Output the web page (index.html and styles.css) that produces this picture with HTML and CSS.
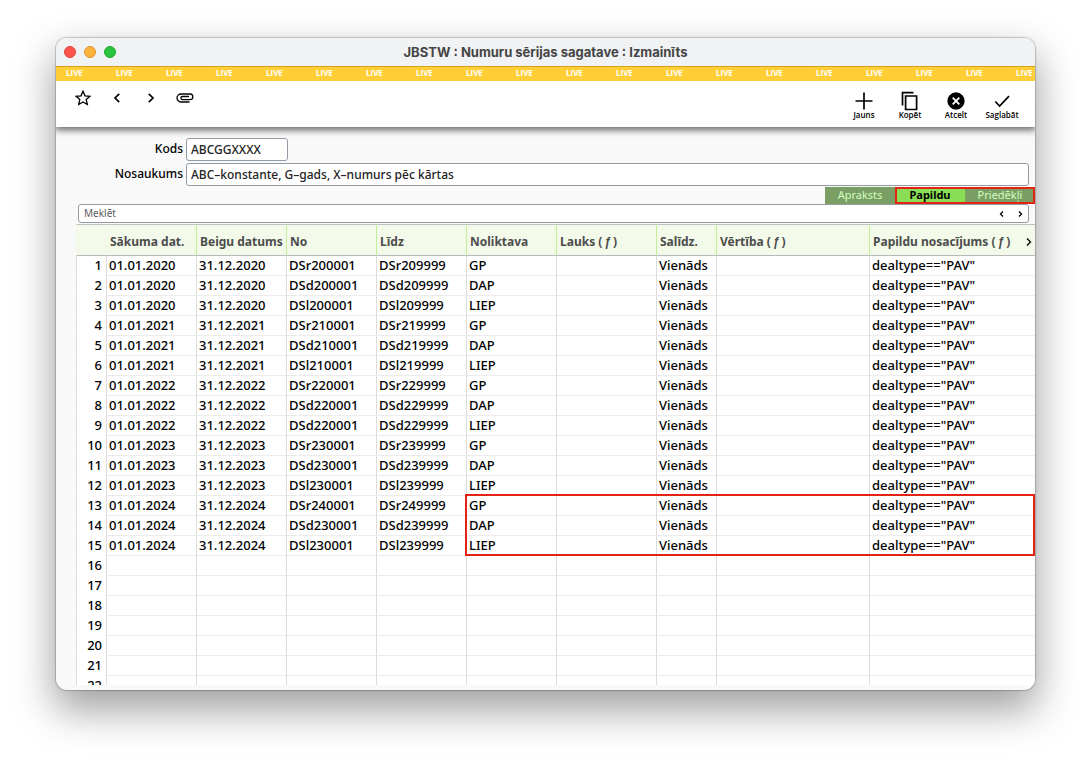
FILE: index.html
```
<!DOCTYPE html>
<html lang="lv">

<head>
    <meta charset="UTF-8">
    <meta name="viewport" content="width=device-width, initial-scale=1.0">
    <title>JBSTW : Numuru sērijas sagatave : Izmainīts</title>
    <link rel="stylesheet" href="styles.css">
</head>

<body>
    <div class="window">
        <header class="titlebar">
            <div class="lights">
                <button class="light red" aria-label="Aizvērt"></button>
                <button class="light orange" aria-label="Minimizēt"></button>
                <button class="light green" aria-label="Maksimizēt"></button>
            </div>
            <h1>JBSTW : Numuru sērijas sagatave : Izmainīts</h1>
        </header>

        <div class="banner" id="banner"></div>

        <div class="toolbar">
            <div class="nav">
                <button aria-label="Izlase">
                    <svg width="16" height="16" viewBox="0 0 16 16"><path d="M8 1.200l2 4.600 5 .5-3.800 3.300 1.100 4.900L8 11.900l-4.300 2.600 1.100-4.900L1 6.300l5-.5z"/></svg>
                </button>
                <button aria-label="Iepriekšējais">
                    <svg width="16" height="16" viewBox="0 0 16 16"><path class="bold" d="M10.200 3.800L6 8l4.200 4.200"/></svg>
                </button>
                <button aria-label="Nākamais">
                    <svg width="16" height="16" viewBox="0 0 16 16"><path class="bold" d="M5.800 3.800L10 8l-4.200 4.200"/></svg>
                </button>
                <button aria-label="Pielikumi">
                    <svg width="18" height="16" viewBox="0 0 18 16"><path d="M13.500 12H5a4 4 0 0 1 0-8h9a2.800 2.800 0 0 1 0 5.700H6.500a1.500 1.500 0 0 1 0-3.200h6.500"/></svg>
                </button>
            </div>
            <div class="actions">
                <button>
                    <svg width="20" height="20" viewBox="0 0 20 20"><path class="bold" d="M10 1.500v17M1.500 10h17"/></svg>
                    Jauns
                </button>
                <button>
                    <svg width="20" height="20" viewBox="0 0 20 20"><path class="bold" d="M2.500 14.500V1.700h11M5.600 5h11v13.500h-11z"/></svg>
                    Kopēt
                </button>
                <button>
                    <svg width="20" height="20" viewBox="0 0 20 20"><circle cx="10" cy="10" r="8" fill="#000"/><path class="white" d="M6.700 6.700l6.600 6.600M13.300 6.700l-6.600 6.600"/></svg>
                    Atcelt
                </button>
                <button>
                    <svg width="20" height="20" viewBox="0 0 20 20"><path class="bold" d="M3.300 10.500l4.300 4.500L17 5.200"/></svg>
                    Saglabāt
                </button>
            </div>
        </div>

        <main class="content">
            <form class="fields">
                <label for="kods">Kods</label>
                <input type="text" id="kods" class="short" value="ABCGGXXXX">
                <label for="nosaukums">Nosaukums</label>
                <input type="text" id="nosaukums" value="ABC–konstante, G–gads, X–numurs pēc kārtas">
            </form>

            <div class="tabs">
                <button class="tab">Apraksts</button>
                <div class="tab-group">
                    <button class="tab active">Papildu</button>
                    <button class="tab">Priedēkļi</button>
                </div>
            </div>

            <div class="search">
                <input type="text" placeholder="Meklēt" aria-label="Meklēt">
                <button aria-label="Meklēt atpakaļ"><svg width="8" height="8" viewBox="0 0 8 8"><path d="M5 1.500L2.500 4 5 6.500"/></svg></button>
                <button aria-label="Meklēt uz priekšu"><svg width="8" height="8" viewBox="0 0 8 8"><path d="M3 1.500L5.500 4 3 6.500"/></svg></button>
            </div>

            <div class="grid">
                <table>
                    <colgroup>
                        <col class="c-num"><col class="c-std"><col class="c-std"><col class="c-std"><col class="c-std">
                        <col class="c-std"><col class="c-lauks"><col class="c-salidz"><col class="c-vert"><col>
                    </colgroup>
                    <thead>
                        <tr>
                            <th></th>
                            <th>Sākuma dat.</th>
                            <th>Beigu datums</th>
                            <th>No</th>
                            <th>Līdz</th>
                            <th>Noliktava</th>
                            <th>Lauks (<span class="fn">ƒ</span>)</th>
                            <th>Salīdz.</th>
                            <th>Vērtība (<span class="fn">ƒ</span>)</th>
                            <th>
                                <div class="last-head">
                                    <span>Papildu nosacījums (<span class="fn">ƒ</span>)</span>
                                    <button aria-label="Nākamās kolonnas"><svg width="8" height="10" viewBox="0 0 8 10"><path d="M2 1.500L5.500 5 2 8.500"/></svg></button>
                                </div>
                            </th>
                        </tr>
                    </thead>
                    <tbody id="rows"></tbody>
                </table>
                <div class="highlight"></div>
            </div>
        </main>
    </div>

    <script src="script.js"></script>
</body>

</html>
```
FILE: styles.css
```
* {
    box-sizing: border-box;
}

body {
    margin: 0;
    height: 100vh;
    padding: 38px 56px 74px;
    background: #fff;
    font-family: "Noto Sans", "Open Sans", sans-serif;
    font-size: 13px;
    color: #000;
    overflow: hidden;
}

button {
    padding: 0;
    border: none;
    background: none;
    font-family: inherit;
    color: inherit;
}

svg {
    display: block;
    fill: none;
    stroke: #000;
    stroke-width: 1.3;
}

.bold {
    stroke-width: 1.7;
}

.white {
    stroke: #fff;
    stroke-width: 1.8;
}

.window {
    display: flex;
    flex-direction: column;
    height: 100%;
    border-radius: 11px;
    background: #f9f9f9;
    box-shadow: 0 0 1px 1px rgba(0, 0, 0, 0.2), 0 18px 40px 2px rgba(0, 0, 0, 0.38);
    overflow: hidden;
}

/* Title bar */
.titlebar {
    display: grid;
    grid-template-columns: 1fr auto 1fr;
    align-items: center;
    flex: none;
    height: 28px;
    padding: 0 8px;
    background: #f1f2f4;
}

.lights {
    display: flex;
    gap: 8px;
}

.light {
    width: 12px;
    height: 12px;
    border-radius: 50%;
}

.red {
    background: #ff544e;
    border: 1px solid #e2423d;
}

.orange {
    background: #fdb23d;
    border: 1px solid #df962e;
}

.green {
    background: #2ac440;
    border: 1px solid #1fa832;
}

h1 {
    margin: 0;
    font-family: Inter, sans-serif;
    font-size: 13px;
    line-height: 16px;
    font-weight: 700;
    color: #454545;
}

.banner {
    display: flex;
    flex: none;
    height: 15px;
    border-top: 1px solid #d3a21a;
    background: #ffce37;
    color: #fff;
    font-family: "Open Sans", sans-serif;
    font-size: 8px;
    line-height: 11px;
    font-weight: 700;
    overflow: hidden;
    z-index: 2;
}

.banner span {
    flex: 0 0 50px;
    padding-left: 10px;
}

/* Toolbar */
.toolbar {
    display: flex;
    justify-content: space-between;
    flex: none;
    height: 46px;
    padding: 0 10px;
    background: #fff;
    box-shadow: 0 2px 7px 1px rgba(0, 0, 0, 0.6);
    z-index: 1;
}

.nav {
    display: flex;
    height: 34px;
}

.nav button {
    display: grid;
    place-items: center;
    width: 34px;
}

.actions {
    display: flex;
}

.actions button {
    display: flex;
    flex-direction: column;
    align-items: center;
    width: 46px;
    padding-top: 10px;
    font-family: "Open Sans", sans-serif;
    font-size: 8px;
    line-height: 8px;
    font-weight: 600;
}

/* Form */
.content {
    display: flex;
    flex-direction: column;
    flex: 1;
    min-height: 0;
    padding: 11px 0 5px;
}

.fields {
    display: grid;
    grid-template-columns: 127px 1fr;
    gap: 2px 3px;
    margin-right: 6px;
}

.fields label {
    text-align: right;
    font-size: 12px;
    line-height: 22px;
    font-weight: 500;
}

.fields input {
    width: 100%;
    height: 23px;
    padding: 0 4px;
    border: 1px solid #929ba4;
    border-radius: 3px;
    background: #fff;
    font-family: inherit;
    font-size: 12px;
    font-weight: 500;
    color: #222;
}

.fields .short {
    width: 102px;
}

.tabs {
    display: flex;
    justify-content: flex-end;
    margin-top: 1px;
}

.tab-group {
    display: flex;
    position: relative;
}

.tab-group::after {
    content: "";
    position: absolute;
    inset: 0;
    border: 2px solid #e32314;
    pointer-events: none;
}

.tab {
    width: 70px;
    height: 17px;
    background: #7a9e64;
    color: #d3ffc0;
    font-size: 11px;
    line-height: 15px;
    padding-bottom: 2px;
}

.tab.active {
    background: #8ade56;
    color: #000;
    font-weight: 700;
}

.search {
    display: flex;
    align-items: center;
    gap: 10px;
    flex: none;
    height: 19px;
    margin: 0 6px 1px 22px;
    padding-right: 4px;
    border: 1px solid #929ba4;
    border-radius: 3px;
    background: #fff;
}

.search input {
    flex: 1;
    height: 17px;
    padding: 0 5px 2px;
    border: none;
    background: none;
    font-family: inherit;
    font-size: 10px;
}

.search input::placeholder {
    color: #5b5b5b;
}

/* Number series table */
.grid {
    position: relative;
    flex: 1;
    min-height: 0;
    margin-left: 20px;
    overflow: hidden;
}

table {
    width: 100%;
    table-layout: fixed;
    border-collapse: separate;
    border-spacing: 0;
}

.c-num {
    width: 30px;
}

.c-std {
    width: 90px;
}

.c-lauks {
    width: 100px;
}

.c-salidz {
    width: 60px;
}

.c-vert {
    width: 153px;
}

th {
    height: 32px;
    padding: 3px 0 0 3px;
    border-top: 1px solid #c0c0c0;
    border-bottom: 1px solid #b9b9b9;
    border-left: 1px solid #c2ef9c;
    background: #f3fae9;
    color: #4d4d4d;
    font-size: 12px;
    line-height: 16px;
    text-align: left;
    white-space: nowrap;
}

th:first-child,
th:nth-child(2) {
    border-left-color: #f3fae9;
}

.fn {
    padding: 0 2px;
    font-family: "Liberation Sans", sans-serif;
    font-style: italic;
}

.last-head {
    display: flex;
    justify-content: space-between;
    align-items: center;
    padding-right: 2px;
}

td {
    height: 20px;
    padding: 0 0 0 2px;
    border-left: 1px solid #dcdcdc;
    border-bottom: 1px solid #ececec;
    background: #fff;
    line-height: 19px;
    font-weight: 500;
    white-space: nowrap;
}

td:first-child {
    padding: 0 4px 0 0;
    border-bottom-color: #fff;
    text-align: right;
}

.highlight {
    position: absolute;
    top: 270px;
    left: 389px;
    right: 0;
    height: 62px;
    border: 2px solid #e32314;
    pointer-events: none;
}
```
FILE: script.js
```
const series = [
    ["2020", "DSr200001", "DSr209999", "GP"],
    ["2020", "DSd200001", "DSd209999", "DAP"],
    ["2020", "DSl200001", "DSl209999", "LIEP"],
    ["2021", "DSr210001", "DSr219999", "GP"],
    ["2021", "DSd210001", "DSd219999", "DAP"],
    ["2021", "DSl210001", "DSl219999", "LIEP"],
    ["2022", "DSr220001", "DSr229999", "GP"],
    ["2022", "DSd220001", "DSd229999", "DAP"],
    ["2022", "DSd220001", "DSd229999", "LIEP"],
    ["2023", "DSr230001", "DSr239999", "GP"],
    ["2023", "DSd230001", "DSd239999", "DAP"],
    ["2023", "DSl230001", "DSl239999", "LIEP"],
    ["2024", "DSr240001", "DSr249999", "GP"],
    ["2024", "DSd230001", "DSd239999", "DAP"],
    ["2024", "DSl230001", "DSl239999", "LIEP"]
];

const rowCount = 22;
const tbody = document.getElementById("rows");

for (let i = 0; i < rowCount; i++) {
    let cells = [i + 1, "", "", "", "", "", "", "", "", ""];
    if (series[i]) {
        const [year, from, to, store] = series[i];
        cells = [i + 1, "01.01." + year, "31.12." + year, from, to, store, "", "Vienāds", "", 'dealtype=="PAV"'];
    }
    const row = tbody.insertRow();
    cells.forEach(function(text) {
        row.insertCell().textContent = text;
    });
}

const banner = document.getElementById("banner");
const liveCount = Math.ceil(banner.clientWidth / 50);
for (let i = 0; i < liveCount; i++) {
    const span = document.createElement("span");
    span.textContent = "LIVE";
    banner.appendChild(span);
}
```
